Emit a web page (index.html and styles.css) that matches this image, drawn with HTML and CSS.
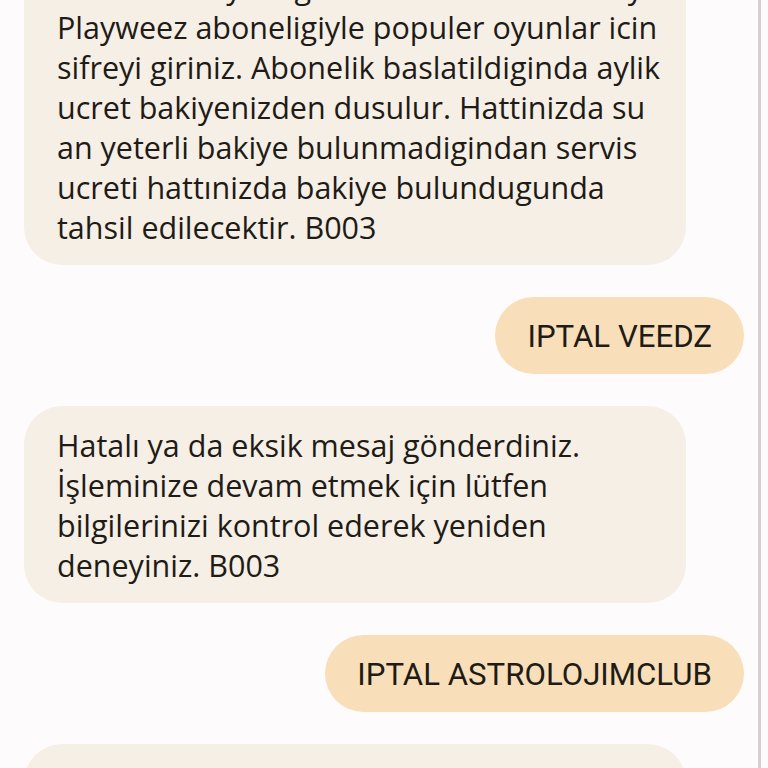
FILE: index.html
```html
<!DOCTYPE html>
<html lang="tr">
<head>
<meta charset="utf-8">
<title>Mesajlar</title>
<link rel="stylesheet" href="styles.css">
</head>
<body>
<div class="screen">
  <div class="thread">
    <div class="msg msg-in">
      <p class="msg-text">Merhaba kaydin gerceklesmistir. Bu ilk ay<br>Playweez aboneligiyle populer oyunlar icin<br>sifreyi giriniz. Abonelik baslatildiginda aylik<br>ucret bakiyenizden dusulur. Hattinizda su<br>an yeterli bakiye bulunmadigindan servis<br>ucreti hattınizda bakiye bulundugunda<br>tahsil edilecektir. B003</p>
    </div>
    <div class="msg msg-out">
      <p class="msg-text">IPTAL VEEDZ</p>
    </div>
    <div class="msg msg-in">
      <p class="msg-text">Hatalı ya da eksik mesaj gönderdiniz.<br>İşleminize devam etmek için lütfen<br>bilgilerinizi kontrol ederek yeniden<br>deneyiniz. B003</p>
    </div>
    <div class="msg msg-out">
      <p class="msg-text">IPTAL ASTROLOJIMCLUB</p>
    </div>
    <div class="msg msg-in msg-last">
      <p class="msg-text">Hatalı ya da eksik mesaj gönderdiniz.<br>İşleminize devam etmek için lütfen<br>bilgilerinizi kontrol ederek yeniden<br>deneyiniz. B003</p>
    </div>
  </div>
  <div class="scroll-indicator"></div>
</div>
</body>
</html>
```

FILE: styles.css
```css
html, body {
  margin: 0;
  padding: 0;
  background: #fefbfd;
}

.screen {
  position: relative;
  width: 768px;
  height: 768px;
  overflow: hidden;
  background: #fefbfd;
}

.thread {
  display: flex;
  flex-direction: column;
  gap: 32px;
  margin-top: -52px;
  padding: 0 24px;
}

.msg {
  box-sizing: border-box;
  color: #1f1b16;
}

.msg-text {
  margin: 0;
  white-space: nowrap;
}

.msg-in {
  align-self: flex-start;
  width: 662px;
  background: #f5efe6;
  border-radius: 38px;
  padding: 19px 16px 18px 33px;
  font-family: "Open Sans", "Noto Sans", sans-serif;
  font-size: 30.5px;
  line-height: 40px;
}

.msg-last {
  padding-top: 40px;
}

.msg-out {
  align-self: flex-end;
  background: #f8dfb9;
  border-radius: 39px;
  padding: 20px 32px 17px 32px;
  font-family: Roboto, "Liberation Sans", sans-serif;
  font-size: 31.2px;
  line-height: 40px;
}

.scroll-indicator {
  position: absolute;
  top: 0;
  bottom: 0;
  right: 7px;
  width: 3px;
  background: #d6d0d4;
}
```
